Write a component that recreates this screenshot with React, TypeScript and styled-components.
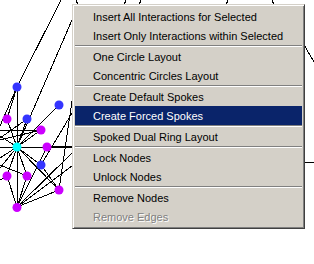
import React from "react";
import styled, { createGlobalStyle } from "styled-components";

const GlobalStyle = createGlobalStyle`
  html, body { margin: 0; padding: 0; background: #ffffff; }
  body { width: 314px; height: 264px; overflow: hidden; }
`;

const Canvas = styled.div`
  position: relative;
  width: 314px;
  height: 264px;
  background: #ffffff;
  overflow: hidden;
`;

const GraphSvg = styled.svg`
  display: block;
  width: 314px;
  height: 264px;
`;

const Menu = styled.div`
  position: absolute;
  left: 72px;
  top: 4px;
  width: 233px;
  box-sizing: border-box;
  background: #d4d0c8;
  border: 1px solid;
  border-color: #d4d0c8 #404040 #404040 #d4d0c8;
  box-shadow: inset 1px 1px 0 #ffffff, inset -1px -1px 0 #808080;
  padding: 2px;
  display: flex;
  flex-direction: column;
  font-family: "Liberation Sans", Arial, sans-serif;
  font-size: 11px;
`;

const Item = styled.div<{ $selected?: boolean; $disabled?: boolean }>`
  height: 19px;
  display: flex;
  align-items: center;
  padding-left: 18px;
  white-space: nowrap;
  background: ${(p) => (p.$selected ? "#0a246a" : "transparent")};
  color: ${(p) => (p.$selected ? "#ffffff" : p.$disabled ? "#808080" : "#000000")};
  text-shadow: ${(p) => (p.$disabled ? "1px 1px 0 #ffffff" : "none")};
`;

const Separator = styled.div`
  height: 0;
  border-top: 1px solid #808080;
  border-bottom: 1px solid #ffffff;
`;

type Node = { x: number; y: number; c: string };
const BLUE = "#3535ff";
const MAG = "#cc00ff";
const CYAN = "#00ffff";

const nodes: Node[] = [
  { x: 17, y: 87, c: BLUE },
  { x: 59, y: 105, c: BLUE },
  { x: 7, y: 119, c: MAG },
  { x: 27, y: 119, c: BLUE },
  { x: 41, y: 130, c: MAG },
  { x: 47, y: 147, c: MAG },
  { x: 41, y: 165, c: BLUE },
  { x: 7, y: 176, c: MAG },
  { x: 27, y: 176, c: MAG },
  { x: 59, y: 190, c: MAG },
  { x: 17, y: 207.5, c: MAG },
  { x: 17, y: 147, c: CYAN },
];

const edges: number[][] = [
  [17, 87, 61, 0],
  [17, 87, 7, 119],
  [17, 87, 17, 147],
  [17, 87, 0, 126],
  [72, 20, 17, 147],
  [59, 105, 17, 147],
  [7, 119, 17, 147],
  [27, 119, 17, 147],
  [27, 119, 0, 138],
  [41, 130, 17, 147],
  [0, 130, 41, 130],
  [0, 140, 41, 130],
  [17, 147, 0, 147],
  [17, 147, 0, 158],
  [17, 147, 0, 168],
  [0, 136, 17, 147],
  [17, 147, 47, 147],
  [17, 147, 41, 165],
  [17, 147, 7, 176],
  [17, 147, 27, 176],
  [17, 147, 17, 207],
  [17, 147, 59, 190],
  [41, 165, 59, 190],
  [47, 147, 17, 207],
  [7, 176, 17, 207],
  [27, 176, 17, 207],
  [0, 180, 7, 176],
  [0, 165, 27, 176],
  [17, 207, 59, 190],
  [17, 207, 72, 153],
  [17, 207, 72, 166],
  [72, 101, 59, 190],
  [72, 113, 41, 165],
  [76, 0, 80, 10],
  [126, 0, 122, 10],
  [141, 0, 137, 10],
  [228, 0, 224, 10],
  [272, 0, 276, 10],
  [300, 38, 314, 62],
  [300, 162, 314, 162],
];

const items: { label: string; selected?: boolean; disabled?: boolean; sepAfter?: boolean }[] = [
  { label: "Insert All Interactions for Selected" },
  { label: "Insert Only Interactions within Selected", sepAfter: true },
  { label: "One Circle Layout" },
  { label: "Concentric Circles Layout", sepAfter: true },
  { label: "Create Default Spokes" },
  { label: "Create Forced Spokes", selected: true, sepAfter: true },
  { label: "Spoked Dual Ring Layout", sepAfter: true },
  { label: "Lock Nodes" },
  { label: "Unlock Nodes", sepAfter: true },
  { label: "Remove Nodes" },
  { label: "Remove Edges", disabled: true },
];

export default function App() {
  return (
    <>
      <GlobalStyle />
      <Canvas>
        <GraphSvg viewBox="0 0 314 264">
          <g stroke="#000" strokeWidth={1} shapeRendering="crispEdges">
            {edges.map((e, i) => (
              <line key={i} x1={e[0]} y1={e[1]} x2={e[2]} y2={e[3]} />
            ))}
            <line x1={47} y1={147} x2={72} y2={147} strokeWidth={2} />
          </g>
          {nodes.map((n, i) => (
            <circle key={i} cx={n.x} cy={n.y} r={4.5} fill={n.c} />
          ))}
        </GraphSvg>
        <Menu>
          {items.map((it, i) => (
            <React.Fragment key={i}>
              <Item $selected={it.selected} $disabled={it.disabled}>
                {it.label}
              </Item>
              {it.sepAfter && <Separator />}
            </React.Fragment>
          ))}
        </Menu>
      </Canvas>
    </>
  );
}
